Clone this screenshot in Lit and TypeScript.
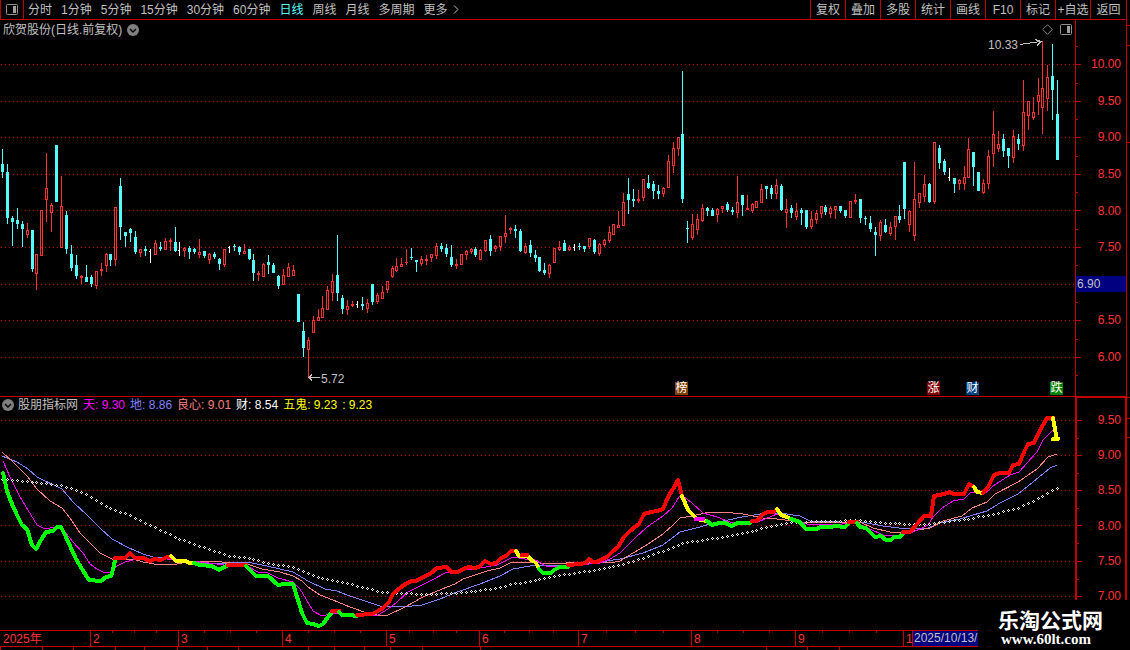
import { LitElement, html, svg, css } from "lit";
import { customElement } from "lit/decorators.js";

// Daily bars: kind, x, high, body top, body bottom, low (plot units).
// c = falling, r = rising, w = unchanged.
const BARS = `
c 2 149 164 172 178;c 7 164 172 218 224;c 12 216 218 222 246;c 17 208 220 224 229;c 22 221 224 229 247
r 27 223 230 235 238;c 32 230 230 269 272;r 36 254 254 274 290;r 41 210 210 256 256;r 46 153 188 200 222
r 51 203 205 213 232;c 56 145 145 202 202;r 61 176 206 248 248;c 66 211 215 249 254;c 71 245 254 268 271
c 76 255 265 276 279;r 81 275 276 278 284;c 86 265 277 282 282;c 91 275 277 284 287;r 96 271 271 286 289
r 101 263 269 271 276;r 106 253 254 266 272;c 110 254 254 260 266;r 115 207 207 260 266;c 120 178 186 227 240
c 125 232 232 236 247;c 130 228 229 233 242;c 135 231 237 252 254;r 140 249 249 253 257;c 145 246 249 251 256
w 150 249 251 252 263;r 155 240 243 255 255;c 160 242 247 249 251;r 165 238 241 250 250;r 170 238 240 242 251
c 175 227 242 251 252;w 179 242 250 251 256;r 184 247 248 251 257;c 189 246 248 252 259;c 194 248 249 252 254
r 199 239 252 255 258;c 204 251 251 256 258;r 209 253 254 260 264;c 214 252 254 257 259;c 219 258 259 264 270
r 224 249 249 265 267;w 229 246 247 248 253;c 234 244 246 247 251;c 239 246 247 252 255;r 244 244 251 254 254
c 249 249 249 259 260;c 253 254 260 273 281;r 258 271 273 275 281;r 263 263 264 277 277;c 268 255 262 265 274
c 273 263 265 273 273;c 278 275 276 286 289;r 283 269 275 285 285;r 288 263 267 277 277;r 293 265 270 276 276
c 298 294 294 322 322;c 303 322 331 348 357;r 308 337 340 350 377;r 313 316 320 333 333;r 318 309 317 321 321
r 322 296 308 318 318;r 327 286 290 310 310;r 332 274 281 293 301;c 337 235 275 293 301;c 342 295 298 309 314
r 347 300 306 310 315;r 352 301 304 306 307;w 357 301 304 305 308;c 362 297 304 306 310;r 367 299 303 309 313
c 372 284 284 302 305;r 377 293 295 302 304;r 382 286 292 299 299;r 387 281 281 290 293;r 392 266 268 277 278
r 396 258 266 271 272;r 401 258 264 267 267;r 406 249 262 263 265;c 411 248 257 258 260;c 416 260 260 262 272
r 421 256 259 264 266;r 426 255 259 261 265;r 431 254 254 258 262;r 436 243 246 256 259;c 441 243 246 249 252
c 446 244 248 254 257;c 451 245 257 265 267;r 456 259 264 266 269;r 461 254 254 265 265;r 466 250 251 255 260
r 471 248 249 252 254;c 475 247 249 255 257;r 480 249 250 260 260;r 485 240 240 251 252;c 490 235 239 251 256
r 495 245 246 249 252;r 500 236 236 247 251;r 505 215 233 237 243;r 510 227 228 230 234;c 515 225 229 231 238
c 520 229 231 251 252;r 525 243 246 253 254;c 530 240 245 253 257;c 535 250 255 258 262;c 539 257 257 271 272
c 544 263 270 273 275;r 549 264 265 274 278;r 554 248 248 263 263;r 559 241 247 250 251;c 564 240 243 251 251
r 569 245 247 250 251;w 574 244 247 248 251;c 579 243 246 247 250;c 584 246 246 249 252;r 589 238 238 247 249
c 594 239 240 252 254;r 599 243 244 254 256;r 604 239 240 245 247;r 609 226 232 241 243;r 613 224 224 235 235
r 618 211 225 228 228;r 623 193 202 226 226;c 628 178 194 200 214;c 633 189 199 201 207;r 638 190 199 201 203
r 643 179 179 198 201;c 648 175 183 188 189;c 653 181 184 191 199;c 658 185 191 194 199;r 663 187 188 194 197
r 668 155 161 188 188;r 673 142 148 166 173;r 678 137 137 149 156;c 682 71 134 199 203;c 687 221 228 229 243
r 692 214 224 238 240;r 697 214 219 230 235;r 702 204 208 221 222;c 707 207 208 211 216;c 712 208 210 216 216
r 717 208 209 215 222;r 722 206 206 209 213;c 727 202 204 210 212;c 732 207 210 212 215;r 737 176 202 213 218
c 742 195 195 205 216;r 747 195 208 210 210;r 752 203 204 211 213;r 756 201 201 208 208;r 761 184 189 203 203
c 766 186 186 189 199;c 771 185 188 194 199;r 776 179 185 194 199;c 781 184 186 210 211;r 786 199 209 213 228
c 791 205 208 213 218;r 796 203 211 217 220;c 801 208 210 213 225;c 806 210 210 227 229;r 811 211 219 227 229
r 816 210 213 220 224;r 821 206 206 214 218;c 825 205 207 212 215;r 830 206 208 214 218;r 835 206 206 210 219
c 840 206 206 211 213;c 845 210 210 216 218;r 850 201 201 218 218;r 855 194 200 202 204;c 860 199 199 218 223
c 865 216 218 219 225;c 870 216 223 229 232;c 875 227 232 235 256;r 880 220 222 236 241;c 885 219 225 232 233
r 890 222 227 234 236;r 895 216 216 227 240;c 899 205 216 220 223;c 904 162 162 209 219;r 909 210 211 225 232
r 914 162 199 236 241;r 919 193 193 203 208;r 924 175 184 197 202;c 929 183 184 202 203;r 934 142 142 202 204
c 939 145 148 163 169;c 944 159 161 172 175;w 949 168 177 178 181;c 954 178 178 184 193;r 959 179 180 184 190
r 964 166 177 184 190;r 968 138 149 178 178;c 973 152 152 167 186;c 978 172 172 191 191;r 983 179 183 193 194
r 988 150 156 184 189;r 993 111 134 154 167;r 998 131 144 149 152;c 1003 134 139 151 157;c 1008 148 148 156 168
r 1013 130 136 158 163;c 1018 134 139 144 150;r 1023 80 112 146 151;r 1028 101 101 116 130;r 1033 97 112 118 120
r 1038 78 95 102 115;r 1042 41 88 108 134;r 1047 65 77 99 111;c 1052 44 76 90 120;c 1057 80 114 160 160`
  .trim()
  .split(/[;\n]/)
  .map((row) => {
    const [kind, ...n] = row.trim().split(" ");
    const [x, high, top, bottom, low] = n.map(Number);
    return { kind, x, high, top, bottom, low };
  });

// Strength line, coloured by state.
const STATE_LINE: [string, string][] = [
  ["#ff00ff", "533,561 537,562"],
  ["#00ff00", "3,473 7,491 12,504 17,515 22,525 27,529 32,545 36,549 41,540 46,532 53,531 57,527 61,527 66,537 71,548 76,559 82,569 89,580 101,581 106,577 111,576 114,566 115,559"],
  ["#ff0000", "115,558 125,558 130,553 135,558 143,558 150,561 155,559 161,560 167,557 171,557"],
  ["#ffff00", "171,556 176,561 185,561 190,563 194,563"],
  ["#00ff00", "194,563 200,565 212,566 219,570 228,565"],
  ["#ff0000", "228,565 246,565"],
  ["#00ff00", "246,566 256,576 268,576 278,585 284,584 293,584 298,600 302,613 307,623 313,624 319,626 323,624 328,617 332,612"],
  ["#ff0000", "332,611 339,611"],
  ["#00ff00", "339,612 342,615 350,615 357,616"],
  ["#ff0000", "357,615 372,614 378,611 383,608 389,602 393,594 400,588 407,583 412,581 416,581 421,578 430,574 437,568 447,567 451,572 458,572 465,568 470,567 474,568 479,567 485,561 491,564 496,563 501,558 506,556 511,551 516,551"],
  ["#ffff00", "516,551 519,556 527,556 533,561"],
  ["#ff0000", "522,555 527,555"],
  ["#ffff00", "536,563 539,569"],
  ["#00ff00", "539,569 543,573 551,573 554,570 560,567 568,567"],
  ["#ff0000", "568,565 580,564 586,563 589,559 593,562 597,562 602,559 607,557 612,552 618,547 624,537 630,531 639,524 644,514 651,512 657,511 663,509 668,497 673,489 678,480 682,496"],
  ["#ffff00", "682,496 688,510 697,519 707,521"],
  ["#ff00ff", "696,519 703,519"],
  ["#00ff00", "707,521 712,525 719,523 725,523 732,526 737,523 750,523"],
  ["#ff0000", "752,521 757,521 763,514 768,512 774,512 777,509"],
  ["#ffff00", "777,509 781,515 787,517 791,519"],
  ["#00ff00", "791,519 800,522 806,529 816,529 821,527 831,527 835,526 845,527 849,523"],
  ["#ff0000", "849,522 857,522"],
  ["#00ff00", "857,523 860,527 866,528 871,533 875,537 881,536 886,540 891,540 894,537 900,537 903,533"],
  ["#ff0000", "903,532 910,532 917,524 924,516 931,516 934,496 944,494 950,492 953,494 964,494 969,484 974,487"],
  ["#ffff00", "974,487 977,492 983,493"],
  ["#ff0000", "983,493 988,487 994,475 1000,473 1009,473 1013,465 1019,464 1024,452 1028,444 1034,443 1039,432 1047,418 1053,418"],
  ["#ffff00", "1053,418 1056,435 1056,439 1053,439 1058,439"],
];

const SKY =
  "3,461 10,477 20,497 28,510 37,525 43,528 50,528 60,527 65,532 73,542 83,553 90,564 97,569 105,573 110,572 117,566 125,562 133,560 167,559 200,562 217,564 230,566 247,566 258,572 268,573 278,578 293,582 300,589 306,599 313,611 322,616 333,613 348,613 360,616 378,615 388,609 397,602 408,592 420,586 432,580 445,573 457,571 480,568 497,565 513,557 537,561 548,567 567,566 600,563 610,559 620,553 635,538 647,527 663,516 672,508 679,497 683,496 692,503 703,513 717,517 730,522 747,522 760,521 777,514 790,518 807,524 827,525 857,523 870,529 883,535 900,535 910,533 920,529 928,525 933,517 942,508 953,501 964,499 970,493 977,492 987,492 993,486 1010,475 1019,472 1027,463 1037,452 1043,440 1053,430";
const HEART =
  "2,452 13,462 27,476 37,489 50,501 62,508 70,518 80,533 90,543 100,553 112,559 133,559 143,562 160,565 177,564 193,561 213,561 230,563 247,564 262,569 280,572 293,576 302,581 308,587 320,595 333,600 350,607 367,613 377,615 388,615 405,607 423,597 447,587 455,584 463,579 487,571 500,568 510,563 523,562 540,563 563,564 570,562 587,562 610,563 620,561 633,553 645,546 663,534 673,525 680,518 692,516 705,513 723,512 743,514 763,518 777,519 800,522 840,522 860,522 873,528 890,532 907,532 930,528 943,521 962,516 972,508 987,502 995,494 1018,482 1037,469 1048,457 1057,454";
const EARTH =
  "2,456 17,462 28,469 37,477 62,489 73,502 87,515 100,528 112,539 127,547 143,554 153,557 173,559 200,563 217,564 227,563 233,562 247,562 267,566 293,572 308,581 325,589 337,591 347,595 362,600 380,606 403,607 422,605 440,599 457,592 480,584 500,576 513,569 530,566 567,565 600,562 620,559 643,553 663,545 680,532 700,527 713,523 728,520 742,517 760,514 780,513 800,516 810,521 840,522 867,523 883,526 907,529 928,528 940,523 960,519 973,515 987,511 1000,503 1018,494 1033,482 1050,468 1057,465";
const WEALTH =
  "2,479 33,482 60,485 72,488 82,492 97,501 107,507 130,515 150,525 180,539 200,546 230,556 247,557 263,562 293,567 308,573 325,579 350,584 383,592 400,593 423,594 457,593 480,590 500,587 510,584 530,581 560,575 593,570 613,566 633,561 653,554 673,547 683,543 700,540 723,537 750,531 762,528 793,522 827,521 860,520 877,522 907,524 930,524 947,521 967,519 980,516 990,515 1003,511 1017,508 1033,501 1050,491 1058,487";

function dottedSeries(points: string): string {
  const pts = points.split(" ").map((p) => p.split(",").map(Number));
  let i = 0;
  return BARS.map(({ x }) => {
    while (i < pts.length - 2 && pts[i + 1][0] < x) i++;
    const [[x0, y0], [x1, y1]] = [pts[i], pts[i + 1]];
    const y = Math.round(y0 + ((y1 - y0) * (x - x0)) / (x1 - x0));
    return `M${x} ${y - 1}h1v1h-1zM${x - 1} ${y}h1v1h-1zM${x + 1} ${y}h1v1h-1zM${x} ${y + 1}h1v1h-1z`;
  }).join("");
}

const PRICE_ROWS = [64, 101, 137, 174, 210, 247, 284, 320, 357];
const PRICE_HALVES = [46, 83, 119, 156, 192, 229, 265, 302, 339, 375];
const INDEX_ROWS = [420, 455, 490, 525, 561, 596];
const INDEX_HALVES = [438, 473, 508, 543, 579, 614];

const chevron = html`<svg class="dot" viewBox="0 0 12 12" aria-hidden="true">
  <circle cx="6" cy="6" r="6" fill="#808080" />
  <path d="M3 5l3 3 3-3" fill="none" stroke="#000" stroke-width="1.4" />
</svg>`;
const pane = html`<svg class="pane" viewBox="0 0 12 11" aria-hidden="true">
  <rect x=".5" y=".5" width="11" height="10" rx="1" fill="none" stroke="#909090" />
  <rect x="7" y="2" width="3" height="7" fill="#a0a0a0" />
</svg>`;

@customElement("app-root")
export class AppRoot extends LitElement {
  static styles = css`
    :host {
      display: grid;
      grid-template-columns: minmax(0, 1fr) 4px;
      position: relative;
      height: 100vh;
      overflow: hidden;
      background: #000;
      color: #c0c0c0;
      font: 12px/16px "Liberation Sans", "Noto Sans CJK SC", sans-serif;
    }
    button {
      all: unset;
      box-sizing: border-box;
      white-space: nowrap;
      cursor: pointer;
    }
    .screen {
      display: grid;
      grid-template-rows: 20px 377px 233px 16px 4px;
      min-width: 0;
    }
    .toolbar {
      display: flex;
      justify-content: space-between;
      height: 19px;
      border-bottom: 1px solid #c00000;
      line-height: 20px;
    }
    .periods {
      display: flex;
      gap: 9px;
      height: 19px;
    }
    .toggle {
      display: flex;
      align-items: center;
      justify-content: center;
      width: 24px;
      margin-right: -5px;
      border: solid #c00000;
      border-width: 0 1px;
    }
    .pane {
      width: 12px;
      height: 11px;
      display: block;
    }
    .active {
      color: #54fcfc;
    }
    .more {
      display: flex;
      align-items: center;
      gap: 5px;
    }
    .more svg {
      width: 6px;
      height: 9px;
    }
    .tools {
      display: grid;
      grid-template-columns: repeat(8, 35px) 36px;
      height: 19px;
    }
    .tools button {
      height: 19px;
      border-left: 1px solid #c00000;
      text-align: center;
    }
    .row {
      display: grid;
      grid-template-columns: minmax(0, 1fr) 51px;
      min-height: 0;
    }
    .plot {
      position: relative;
      min-width: 0;
      overflow: hidden;
    }
    .daily {
      border-bottom: 1px solid #c00000;
    }
    .canvas {
      position: absolute;
      left: 0;
      top: 0;
      width: 100%;
      height: 100%;
    }
    .title {
      position: relative;
      display: flex;
      align-items: center;
      gap: 5px;
      padding: 2px 0 0 3px;
    }
    .dot {
      width: 12px;
      height: 12px;
      flex: none;
    }
    .corner {
      position: absolute;
      right: 3px;
      top: 4px;
      display: flex;
      align-items: center;
      gap: 7px;
    }
    .rhomb {
      width: 11px;
      height: 11px;
      display: block;
    }
    .note {
      position: absolute;
      line-height: 14px;
    }
    .badge {
      position: absolute;
      bottom: 1px;
      width: 13px;
      height: 13px;
      line-height: 13px;
      color: #fff;
      text-align: center;
    }
    .axis {
      display: flex;
      flex-direction: column;
      justify-content: space-between;
      position: relative;
      box-sizing: border-box;
      color: #ff3232;
      text-align: right;
      border-left: 1px solid #c00000;
    }
    .axis span {
      position: relative;
      padding-right: 5px;
    }
    .price {
      padding: 36px 0 31px;
      border-bottom: 1px solid #c00000;
    }
    .axis .mark {
      background: #000080;
      color: #c0c0c0;
      text-align: left;
      padding: 0 0 0 1px;
    }
    .index {
      border: 2px solid #c00000;
      border-top-width: 1px;
      border-right-width: 1px;
      border-bottom: 0;
      padding: 14px 0 26px;
    }
    .index span {
      padding-right: 4px;
    }
    .ticks {
      position: absolute;
      left: 0;
      top: 0;
      width: 6px;
      height: 100%;
    }
    .legend {
      position: relative;
      display: flex;
      align-items: center;
      gap: 5px;
      padding: 0 0 0 2px;
      white-space: pre;
    }
    .legend .name {
      margin-left: -1px;
    }
    .sky { color: #ff00ff; }
    .earth { color: #8080ff; }
    .heart { color: #ff8080; }
    .wealth { color: #ffffff; }
    .ghost { color: #ffff00; }
    .months {
      display: flex;
      border-top: 1px solid #c00000;
      margin-right: 51px;
      color: #ff3232;
      box-sizing: border-box;
      height: 16px;
    }
    .month {
      position: relative;
      box-sizing: border-box;
      flex: none;
      overflow: hidden;
      padding-left: 2px;
      line-height: 16px;
      border-left: 1px solid #c00000;
    }
    .month:first-child {
      border-left-color: transparent;
    }
    .quarters {
      position: absolute;
      left: 0;
      right: 0;
      top: 0;
      display: flex;
      justify-content: space-evenly;
    }
    .quarters i {
      width: 1px;
      height: 2px;
      background: #c00000;
    }
    .today {
      padding: 0 1px;
      line-height: 15px;
      background: #000080;
      color: #c0c0c0;
      border-left: 1px solid #c00000;
    }
    .tabs {
      display: flex;
      border-top: 1px solid #c00000;
      overflow: hidden;
      height: 3px;
    }
    .tab {
      box-sizing: border-box;
      flex: none;
      border-left: 1px solid #c00000;
    }
    .edge {
      border-left: 1px solid #c00000;
    }
    .edge svg {
      display: block;
    }
    .sign {
      position: absolute;
      right: 0;
      bottom: 0;
      box-sizing: border-box;
      width: 152px;
      height: 50px;
      padding: 6px 0 0 20px;
      background: #000;
      color: #fff;
      font-weight: bold;
    }
    .sign strong {
      display: block;
      font: bold 21px/26px "Noto Sans CJK SC", sans-serif;
    }
    .sign a {
      display: block;
      padding-left: 3px;
      font: bold 15px/14px "Liberation Serif", serif;
      color: inherit;
      text-decoration: none;
    }
  `;

  private grid(rows: number[]) {
    return rows.map(
      (y) => svg`<line x1="1" x2="1075" y1=${y + 0.5} y2=${y + 0.5} stroke="#b00000" stroke-dasharray="1 3" />`,
    );
  }

  private bars() {
    const fill: Record<string, string> = { c: "", r: "", w: "" };
    for (const { kind, x, high, top, bottom, low } of BARS) {
      if (kind === "w") {
        fill.w += `M${x} ${high}h1V${low}h-1zM${x - 1} ${top}h1v1h-1z`;
        continue;
      }
      if (top > high) fill[kind] += `M${x} ${high}h1V${top}h-1z`;
      if (low > bottom) fill[kind] += `M${x} ${bottom}h1V${low}h-1z`;
      fill[kind] += `M${x - 1} ${top}h3V${bottom}h-3z`;
      if (kind === "r" && bottom - top > 2) fill.r += `M${x} ${top + 1}h1V${bottom - 1}h-1z`;
    }
    return svg`
      <path d=${fill.c} fill="#54fcfc" />
      <path d=${fill.r} fill="#ff3232" fill-rule="evenodd" />
      <path d=${fill.w} fill="#ffffff" />`;
  }

  private ticks(top: number, height: number, rows: number[], halves: number[]) {
    return html`<svg class="ticks" viewBox="0 ${top} 6 ${height}" preserveAspectRatio="none" shape-rendering="crispEdges" aria-hidden="true">
      ${rows.map((y) => svg`<rect x="0" y=${y} width="5" height="1" fill="#c00000" />`)}
      ${halves.map((y) => svg`<rect x="0" y=${y} width="2" height="1" fill="#c00000" />`)}
    </svg>`;
  }

  private badge(x: number, text: string, color: string) {
    return html`<span class="badge" style="left:${(x / 1075) * 100}%;background:${color}">${text}</span>`;
  }

  render() {
    const periods = ["分时", "1分钟", "5分钟", "15分钟", "30分钟", "60分钟", "日线", "周线", "月线", "多周期"];
    const tools = ["复权", "叠加", "多股", "统计", "画线", "F10", "标记", "+自选", "返回"];
    const months: [string, number][] = [
      ["2025年", 90], ["2", 88], ["3", 104], ["4", 104], ["5", 93], ["6", 99],
      ["7", 113], ["8", 104], ["9", 108], ["1", 9],
    ];
    const tabs = [42, 31, 42, 29, 33, 30, 31, 70, 26, 30, 26, 32, 58, 286, 41, 32, 32];
    return html`
      <div class="screen">
        <nav class="toolbar">
          <div class="periods">
            <button class="toggle" aria-label="侧栏">${pane}</button>
            ${periods.map((p) => html`<button class=${p === "日线" ? "active" : ""}>${p}</button>`)}
            <button class="more">更多
              <svg viewBox="0 0 6 9" aria-hidden="true"><path d="M1 .5l4 4-4 4" fill="none" stroke="#c0c0c0" /></svg>
            </button>
          </div>
          <div class="tools">${tools.map((t) => html`<button>${t}</button>`)}</div>
        </nav>

        <section class="row">
          <div class="plot daily">
            <svg class="canvas" viewBox="0 20 1075 376" preserveAspectRatio="none" shape-rendering="crispEdges" aria-hidden="true">
              ${this.grid(PRICE_ROWS)}${this.bars()}
              <path d="M1020 44.5l21-3M1035 39.5l6 2-4 4M308 377.5h12M312 374.5l-3 3 3 3" fill="none" stroke="#c0c0c0" />
            </svg>
            <div class="title"><span>欣贺股份(日线.前复权)</span>${chevron}</div>
            <div class="corner">
              <svg class="rhomb" viewBox="0 0 11 11" aria-hidden="true"><path d="M5.500 .7l4.800 4.800-4.800 4.800-4.800-4.800z" fill="none" stroke="#808080" /></svg>
              ${pane}
            </div>
            <span class="note" style="left:${(988 / 1075) * 100}%;top:${(18 / 376) * 100}%">10.33</span>
            <span class="note" style="left:${(321 / 1075) * 100}%;top:${(352 / 376) * 100}%">5.72</span>
            ${this.badge(675, "榜", "#804000")} ${this.badge(927, "涨", "#800000")}
            ${this.badge(966, "财", "#004080")} ${this.badge(1050, "跌", "#008000")}
          </div>
          <div class="axis price">
            ${this.ticks(20, 376, PRICE_ROWS, PRICE_HALVES)}
            ${["10.00", "9.50", "9.00", "8.50", "8.00", "7.50"].map((v) => html`<span>${v}</span>`)}
            <span class="mark">6.90</span>
            ${["6.50", "6.00"].map((v) => html`<span>${v}</span>`)}
          </div>
        </section>

        <section class="row">
          <div class="plot">
            <svg class="canvas" viewBox="0 397 1075 233" preserveAspectRatio="none" shape-rendering="crispEdges" aria-hidden="true">
              ${this.grid(INDEX_ROWS)}
              <g fill="none">
                <polyline points=${EARTH} stroke="#8080ff" />
                <polyline points=${HEART} stroke="#ff8080" />
                <polyline points=${SKY} stroke="#ff00ff" />
                <path d=${dottedSeries(WEALTH)} fill="#ffffff" />
                <g stroke-width="4" stroke-linejoin="round" stroke-linecap="round">
                  ${STATE_LINE.map(([color, points]) => svg`<polyline points=${points} stroke=${color} />`)}
                </g>
              </g>
            </svg>
            <div class="legend">${chevron}<span class="name">股朋指标网</span><span class="sky">天: 9.30</span><span class="earth">地: 8.86</span><span class="heart">良心: 9.01</span><span class="wealth">财: 8.54</span><span class="ghost">五鬼: 9.23</span><span class="ghost">: 9.23</span></div>
          </div>
          <div class="axis index">
            ${this.ticks(398, 232, INDEX_ROWS, INDEX_HALVES)}
            ${["9.50", "9.00", "8.50", "8.00", "7.50", "7.00"].map((v) => html`<span>${v}</span>`)}
          </div>
        </section>

        <div class="months">
          ${months.map(
            ([name, span], i) => html`<div class="month" style="width:${(span / 1075) * 100}%">
              ${i > 0 && i < 9 ? html`<div class="quarters"><i></i><i></i><i></i></div>` : ""}${name}
            </div>`,
          )}
          <span class="today">2025/10/13/</span>
        </div>
        <div class="tabs">
          ${tabs.map((span) => html`<div class="tab" style="width:${(span / 1126) * 100}%"></div>`)}
        </div>
      </div>

      <div class="edge">
        <svg width="3" height="600" viewBox="0 0 3 600" shape-rendering="crispEdges" aria-hidden="true">
          <path d="M0 25.500h3M0 45.500h3M0 142.500h3M0 397.500h3M0 418.500h3M0 437.500h3" stroke="#c00000" />
        </svg>
      </div>

      <footer class="sign"><strong>乐淘公式网</strong><a href="#">www.60lt.com</a></footer>
    `;
  }
}
